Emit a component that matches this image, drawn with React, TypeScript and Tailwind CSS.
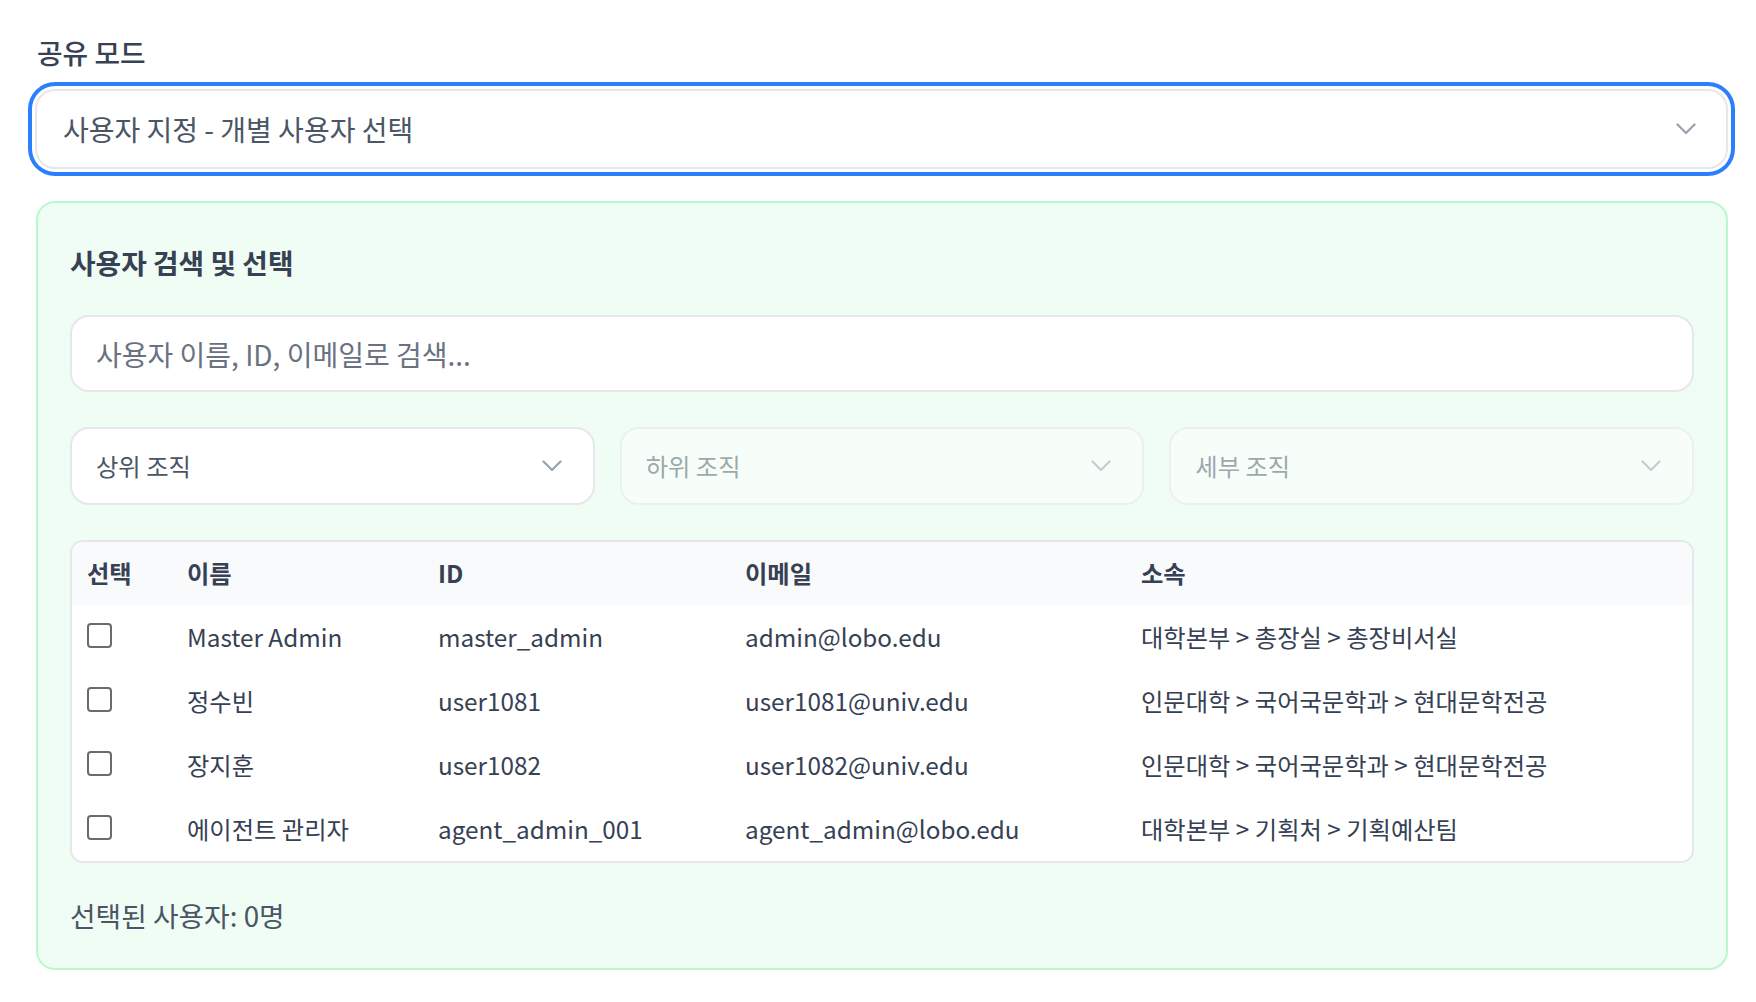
import { useState } from "react";

const users = [
  { name: "Master Admin", id: "master_admin", email: "admin@lobo.edu", org: "대학본부 > 총장실 > 총장비서실" },
  { name: "정수빈", id: "user1081", email: "user1081@univ.edu", org: "인문대학 > 국어국문학과 > 현대문학전공" },
  { name: "장지훈", id: "user1082", email: "user1082@univ.edu", org: "인문대학 > 국어국문학과 > 현대문학전공" },
  { name: "에이전트 관리자", id: "agent_admin_001", email: "agent_admin@lobo.edu", org: "대학본부 > 기획처 > 기획예산팀" },
];

function Chevron({ className = "" }: { className?: string }) {
  return (
    <svg width="20" height="12" viewBox="0 0 20 12" fill="none" className={className}>
      <path d="M1.5 1.5 10 10l8.5-8.5" stroke="currentColor" strokeWidth="2.2" strokeLinecap="round" strokeLinejoin="round" />
    </svg>
  );
}

function OrgSelect({ label, disabled }: { label: string; disabled?: boolean }) {
  return (
    <div
      className={
        "flex-1 h-[78px] flex items-center justify-between pl-[24px] pr-[31px] bg-white border-2 border-gray-200 rounded-[19px] " +
        (disabled ? "opacity-50" : "")
      }
    >
      <span className="text-[24.3px] text-gray-600">{label}</span>
      <Chevron className="text-gray-400" />
    </div>
  );
}

export default function App() {
  const [selected, setSelected] = useState<string[]>([]);

  const toggle = (id: string) =>
    setSelected((s) => (s.includes(id) ? s.filter((x) => x !== id) : [...s, id]));

  return (
    <div
      className="min-h-screen bg-white pt-[33px] pl-[35px] pr-[28px]"
      style={{ fontFamily: '"Noto Sans CJK KR", "Noto Sans", sans-serif' }}
    >
      {/* Share mode */}
      <p className="text-[27.8px] leading-[38px] font-medium text-gray-700 mb-[18px] pl-[2px]">공유 모드</p>
      <div className="h-[80px] flex items-center justify-between pl-[26px] pr-[30px] bg-white border-2 border-gray-200 rounded-[20px] ring-4 ring-blue-500 ring-offset-3">
        <span className="text-[28px] text-gray-600">사용자 지정 - 개별 사용자 선택</span>
        <Chevron className="text-gray-400" />
      </div>

      {/* User picker */}
      <div className="mt-[32px] ml-[1px] bg-green-50 border-2 border-green-200 rounded-[19px] pt-[40px] px-[32px] pb-[34px]">
        <h3 className="text-[27.8px] leading-[38px] font-semibold text-gray-700">사용자 검색 및 선택</h3>

        <div className="mt-[34px] h-[77px] flex items-center px-[24px] bg-white border-2 border-gray-200 rounded-[19px]">
          <span className="text-[28px] text-gray-500">사용자 이름, ID, 이메일로 검색...</span>
        </div>

        <div className="mt-[35px] flex gap-[25px]">
          <OrgSelect label="상위 조직" />
          <OrgSelect label="하위 조직" disabled />
          <OrgSelect label="세부 조직" disabled />
        </div>

        <div className="mt-[35px] bg-white border-2 border-gray-200 rounded-[13px] overflow-hidden">
          <table className="w-full text-left text-[24.3px]">
            <thead className="bg-gray-50">
              <tr className="h-[63px] text-gray-700">
                <th className="w-[99px] pl-[15px] font-bold">선택</th>
                <th className="w-[251px] pl-[16px] font-bold">이름</th>
                <th className="w-[307px] pl-[16px] font-bold">ID</th>
                <th className="w-[396px] pl-[16px] font-bold">이메일</th>
                <th className="pl-[16px] font-bold">소속</th>
              </tr>
            </thead>
            <tbody className="text-gray-700">
              {users.map((u) => {
                const on = selected.includes(u.id);
                return (
                  <tr key={u.id} className="h-[64px]">
                    <td className="pl-[15px]">
                      <button
                        onClick={() => toggle(u.id)}
                        className={
                          "block w-[25px] h-[25px] -mt-[4px] rounded-[4px] border-2 " +
                          (on ? "bg-blue-500 border-blue-500" : "bg-white border-[#6b6b6b]")
                        }
                      />
                    </td>
                    <td className="pl-[16px]">{u.name}</td>
                    <td className="pl-[16px]">{u.id}</td>
                    <td className="pl-[16px]">{u.email}</td>
                    <td className="pl-[16px]">{u.org}</td>
                  </tr>
                );
              })}
            </tbody>
          </table>
        </div>

        <p className="mt-[33px] text-[27.8px] leading-[38px] text-gray-600">선택된 사용자: {selected.length}명</p>
      </div>
    </div>
  );
}
